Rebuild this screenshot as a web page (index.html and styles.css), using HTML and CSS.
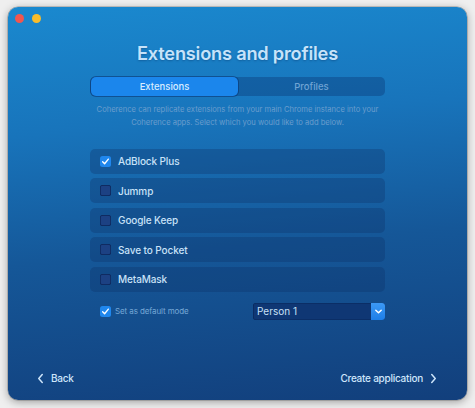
FILE: index.html
```html
<!DOCTYPE html>
<html>
<head>
<meta charset="utf-8">
<link rel="stylesheet" href="styles.css">
</head>
<body>
<div class="window">
  <div class="titlebar">
    <span class="light red"></span>
    <span class="light yellow"></span>
  </div>
  <h1 class="title">Extensions and profiles</h1>
  <div class="content">
    <div class="segmented">
      <div class="seg active">Extensions</div>
      <div class="seg">Profiles</div>
    </div>
    <p class="desc">Coherence can replicate extensions from your main Chrome instance into your<br>Coherence apps. Select which you would like to add below.</p>
    <div class="list">
      <div class="row"><span class="check on"><svg viewBox="0 0 12 12" width="9" height="9"><path d="M2.2 6.4 L4.8 9 L9.8 2.8" fill="none" stroke="#fff" stroke-width="1.8" stroke-linecap="round" stroke-linejoin="round"/></svg></span><span class="label">AdBlock Plus</span></div>
      <div class="row"><span class="check"></span><span class="label">Jummp</span></div>
      <div class="row"><span class="check"></span><span class="label">Google Keep</span></div>
      <div class="row"><span class="check"></span><span class="label">Save to Pocket</span></div>
      <div class="row"><span class="check"></span><span class="label">MetaMask</span></div>
    </div>
    <div class="options">
      <div class="default">
        <span class="check on"><svg viewBox="0 0 12 12" width="9" height="9"><path d="M2.2 6.4 L4.8 9 L9.8 2.8" fill="none" stroke="#fff" stroke-width="1.8" stroke-linecap="round" stroke-linejoin="round"/></svg></span>
        <span class="small">Set as default mode</span>
      </div>
      <div class="select">
        <span class="value">Person 1</span>
        <span class="arrow"><svg viewBox="0 0 10 10" width="9" height="9"><path d="M2 3.5 L5 6.5 L8 3.5" fill="none" stroke="#fff" stroke-width="1.6" stroke-linecap="round" stroke-linejoin="round"/></svg></span>
      </div>
    </div>
  </div>
  <div class="footer">
    <div class="nav"><svg viewBox="0 0 8 12" width="7" height="11"><path d="M6 1.5 L2 6 L6 10.5" fill="none" stroke="#cfe6fb" stroke-width="1.7" stroke-linecap="round" stroke-linejoin="round"/></svg><span>Back</span></div>
    <div class="nav"><span>Create application</span><svg viewBox="0 0 8 12" width="7" height="11"><path d="M2 1.5 L6 6 L2 10.5" fill="none" stroke="#cfe6fb" stroke-width="1.7" stroke-linecap="round" stroke-linejoin="round"/></svg></div>
  </div>
</div>
</body>
</html>
```
FILE: styles.css
```css
html, body {
  margin: 0;
  padding: 0;
  background: #efefef;
}
body {
  font-family: Inter, "Noto Sans", sans-serif;
  padding: 7px 8px 8px 8px;
  width: 475px;
  height: 408px;
  box-sizing: border-box;
}
.window {
  width: 459px;
  height: 393px;
  border-radius: 10px;
  background: linear-gradient(175deg, #1a89cf 0%, #1874bb 30%, #155798 60%, #123f7c 100%);
  box-shadow: 0 2px 8px rgba(0,0,0,0.35), 0 0 0 0.5px rgba(0,0,0,0.3);
  display: flex;
  flex-direction: column;
  align-items: center;
  position: relative;
}
.titlebar {
  align-self: stretch;
  display: flex;
  gap: 8px;
  padding: 6.5px 0 0 6.5px;
  height: 9px;
}
.light {
  width: 9px;
  height: 9px;
  border-radius: 50%;
}
.red { background: #f2564f; }
.yellow { background: #f8bd2c; }
.title {
  margin: 19px 0 0 0;
  font-size: 18.2px;
  font-weight: 600;
  color: #c6e3fa;
  letter-spacing: -0.2px;
  line-height: 22px;
  text-shadow: 0 1px 2px rgba(0,40,90,0.35);
}
.content {
  width: 295px;
  display: flex;
  flex-direction: column;
  margin-top: 13px;
}
.segmented {
  height: 19px;
  border-radius: 5px;
  background: rgba(10, 50, 110, 0.35);
  display: flex;
  padding: 0;
}
.seg {
  flex: 1;
  display: flex;
  align-items: center;
  justify-content: center;
  font-size: 9.5px;
  color: #6fa3d4;
  font-weight: 500;
}
.seg.active {
  flex: 0 0 147px;
  margin-left: 1px;
  background: #1b86ec;
  border-radius: 5px;
  color: #d7ecff;
  box-shadow: 0 0 0 1px rgba(10,50,110,0.55);
}
.desc {
  margin: 7px -10px 0 -10px;
  text-align: center;
  font-size: 7.6px;
  line-height: 13px;
  color: #6a9dcd;
}
.list {
  margin-top: 20px;
  display: flex;
  flex-direction: column;
  gap: 4.6px;
}
.row {
  height: 25px;
  border-radius: 5px;
  background: rgba(12, 45, 100, 0.3);
  display: flex;
  align-items: center;
  padding-left: 10px;
  gap: 7px;
}
.check {
  width: 11px;
  height: 11px;
  border-radius: 2.5px;
  background: #1c4183;
  box-shadow: inset 0 0 0 0.7px rgba(5,25,70,0.7);
  display: flex;
  align-items: center;
  justify-content: center;
  flex: none;
}
.check.on {
  background: #1f87ee;
  box-shadow: none;
}
.label {
  font-size: 10px;
  color: #c9e2f8;
  font-weight: 500;
  letter-spacing: -0.1px;
}
.options {
  margin-top: 11px;
  height: 17px;
  display: flex;
  align-items: center;
  justify-content: space-between;
}
.default {
  display: flex;
  align-items: center;
  gap: 4px;
  padding-left: 10px;
}
.small {
  font-size: 8px;
  color: #76a8d6;
  letter-spacing: -0.1px;
}
.select {
  width: 132px;
  height: 17px;
  display: flex;
  border-radius: 3px;
  background: #0f3774;
  box-shadow: inset 0 0 0 0.6px rgba(0,20,60,0.5);
}
.value {
  flex: 1;
  font-size: 10px;
  color: #c8e0f7;
  display: flex;
  align-items: center;
  padding-left: 4px;
}
.arrow {
  width: 14px;
  display: flex;
  align-items: center;
  justify-content: center;
  background: linear-gradient(#3c99f5, #1d7ee8);
  border-radius: 0 3px 3px 0;
}
.footer {
  margin-top: auto;
  align-self: stretch;
  display: flex;
  justify-content: space-between;
  padding: 0 30px 16px 29px;
}
.nav {
  display: flex;
  align-items: center;
  gap: 7px;
  font-size: 10px;
  font-weight: 500;
  color: #cfe6fb;
  letter-spacing: -0.25px;
}
```
